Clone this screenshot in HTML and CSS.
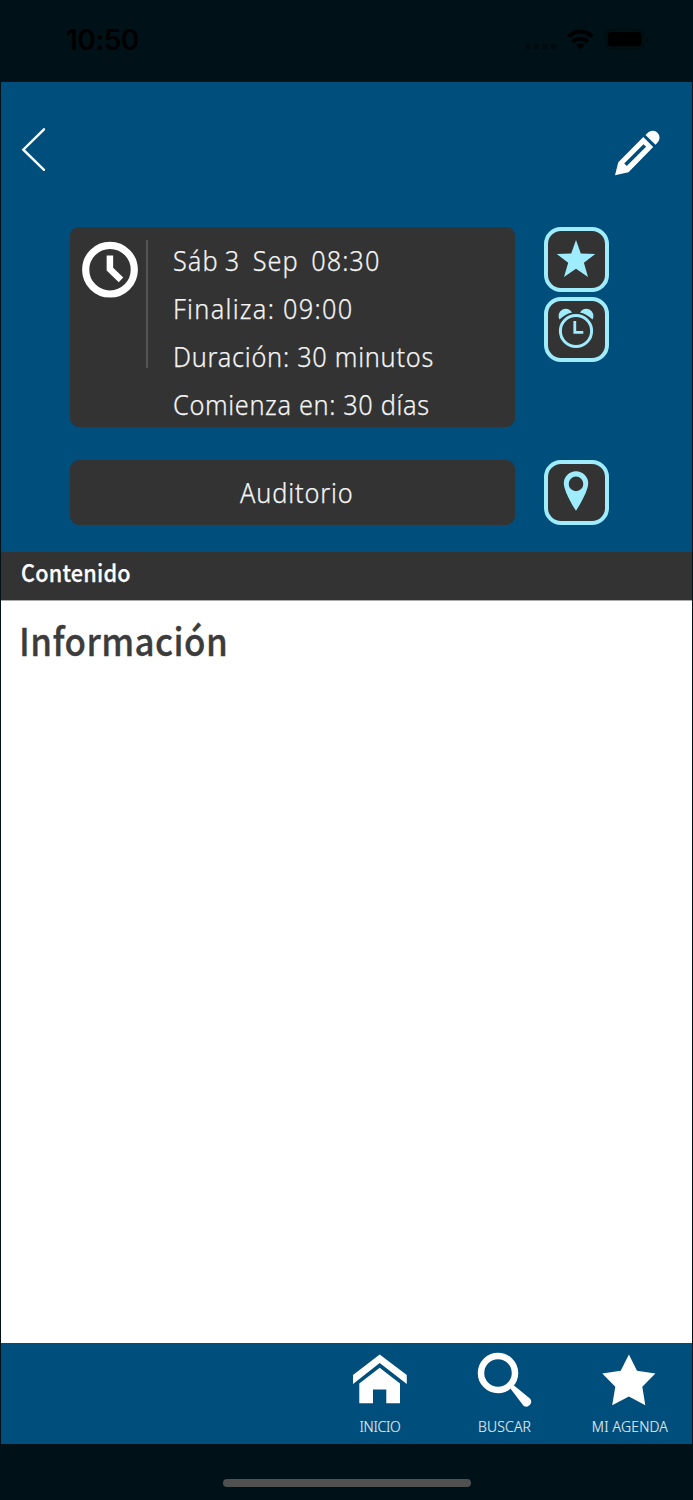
FILE: index.html
```html
<!DOCTYPE html>
<html lang="es">
<head>
<meta charset="utf-8">
<title>Agenda</title>
<link rel="stylesheet" href="styles.css">
</head>
<body>
<div class="phone">
  <div class="status">
    <span class="time">10:50</span>
    <svg class="indicators" width="126" height="30" viewBox="522 24 126 30">
      <g fill="#000b10"><circle cx="528" cy="46.5" r="2.7"/><circle cx="536.5" cy="46.5" r="2.7"/><circle cx="545" cy="46.5" r="2.7"/><circle cx="553.5" cy="46.5" r="2.7"/></g>
      <g fill="none" stroke="#000" stroke-width="4"><path d="M568.2 36.6a17.3 17.3 0 0 1 24.2 0"/><path d="M572.8 41.8a10.8 10.8 0 0 1 15 0"/></g>
      <path d="M576.2 45.2a6.3 6.3 0 0 1 8.2 0L580.3 49.3z"/>
      <rect x="605.2" y="29.5" width="38.6" height="19.6" rx="6" fill="none" stroke="#000c11" stroke-width="1.5"/>
      <rect x="607.5" y="32" width="34.2" height="14.5" rx="3.5"/>
      <path d="M646 36.5q2.5 1 2.500 3t-2.500 3z" fill="#000c11"/>
    </svg>
  </div>
  <header class="hero">
    <div class="toolbar">
      <svg width="26" height="46" viewBox="0 0 26 46" fill="none" stroke="#fff" stroke-width="2.400" stroke-linecap="round"><path d="M23 2.300 2.300 22.700 23 42.800"/></svg>
      <svg width="46" height="46" viewBox="614 130 46 46" fill="#fff"><path fill-rule="evenodd" d="M615 175.200 618.300 162.200 643.300 137 653.200 147 628.500 172.200zM624.200 163.400 626.800 166.100 646.100 146.800 643.500 144.200z"/><path d="M645.500 135 648.300 132.300A6.900 6.900 0 0 1 658 142L655.500 144.800z"/></svg>
    </div>
    <div class="row">
      <div class="card schedule">
        <svg class="clock" width="58" height="58" viewBox="0 0 58 58" fill="none" stroke="#fff"><circle cx="29" cy="28.700" r="24.300" stroke-width="7.200"/><path d="M28.900 14.500V28.200L40 38.800" stroke-width="6.500"/></svg>
        <div class="divider"></div>
        <div class="lines">
          <div><span class="l1">Sáb 3&nbsp; Sep&nbsp; 08:30</span></div>
          <div><span class="l2">Finaliza: 09:00</span></div>
          <div><span class="l3">Duración: 30 minutos</span></div>
          <div><span class="l4">Comienza en: 30 días</span></div>
        </div>
      </div>
      <div class="actions">
        <div class="action"><svg width="57" height="57" viewBox="548 231 57 57" fill="#9fecff"><path d="M576 240 580.800 253.500 595.300 254 583.900 262.800 588 277 576 268.800 564 277 568.200 262.800 556.700 254 571.200 253.500z"/></svg></div>
        <div class="action"><svg width="57" height="57" viewBox="548 301 57 57"><g fill="#9fecff"><path d="M559.500 319.500A6.900 6.900 0 0 1 572 312.400Q564.500 314.200 559.500 319.500z"/><path d="M592.500 319.500A6.900 6.900 0 0 0 580 312.400Q587.500 314.200 592.500 319.500z"/></g><g fill="none" stroke="#9fecff" stroke-width="3"><circle cx="576" cy="331" r="15.600"/><path d="M574.800 321V332.300H583.300" stroke-width="2.800"/></g></svg></div>
      </div>
    </div>
    <div class="row place">
      <div class="card room"><span class="l5">Auditorio</span></div>
      <div class="action"><svg width="57" height="57" viewBox="548 464 57 57" fill="#9fecff"><path fill-rule="evenodd" d="M576 471.200A12.200 12.200 0 0 1 588.200 483.400C588.200 490 580.500 504 576 510.700 571.500 504 563.800 490 563.800 483.400A12.200 12.200 0 0 1 576 471.200zM576 476.600A7.300 7.300 0 1 0 576 491.200 7.300 7.300 0 1 0 576 476.600z"/></svg></div>
    </div>
  </header>
  <div class="section"><span>Contenido</span></div>
  <main class="content"><h1><span>Información</span></h1></main>
  <nav class="tabs">
    <div class="tab"><svg width="58" height="58" viewBox="351 1351 58 58" fill="#fff"><path d="M353 1375 379.700 1354.600 406.800 1375V1384L379.700 1363 353 1384z"/><path d="M359.300 1383.500 379.700 1367.800 400 1383.500V1403.300H386.300V1389.500H373V1403.300H359.300z"/></svg><span class="t1">INICIO</span></div>
    <div class="tab"><svg width="58" height="58" viewBox="476 1351 58 58"><circle cx="498" cy="1373" r="17" fill="none" stroke="#fff" stroke-width="6.500"/><path fill="#fff" d="M513.700 1385.200 530.200 1398.800A4.900 4.900 0 0 1 523.500 1405.700L511.200 1389.500 510.500 1385.800z"/></svg><span class="t2">BUSCAR</span></div>
    <div class="tab"><svg width="58" height="58" viewBox="601 1351 58 58" fill="#fff"><path d="M628.900 1354.600 637 1370.800 655.400 1373.500 642.300 1386.700 645.300 1405.200 628.900 1396.500 612.200 1405.200 615.300 1386.700 602.300 1373.500 620.700 1370.800z"/></svg><span class="t3">MI AGENDA</span></div>
  </nav>
  <div class="home"><div class="handle"></div></div>
</div>
</body>
</html>
```
FILE: styles.css
```css
* { box-sizing: border-box; }
body { margin: 0; font-family: "Noto Sans", sans-serif; }
svg { display: block; flex: none; }
span { display: inline-block; white-space: nowrap; }
.phone { width: 693px; height: 1500px; display: flex; flex-direction: column; border: solid #001217; border-width: 0 1px; background: #fff; }
.status { height: 82px; background: #001217; display: flex; justify-content: space-between; padding: 24px 44px 0 65px; }
.time { font: 600 28px/32px Inter, sans-serif; color: #000; letter-spacing: -0.5px; }
.hero { height: 470px; background: #004e7c; padding-top: 45px; }
.toolbar { display: flex; justify-content: space-between; padding: 0 32px 0 20px; height: 100px; }
.toolbar svg:last-child { margin-top: 3px; }
.row { display: flex; gap: 29px; padding-left: 69px; }
.card { width: 445px; background: #333; border-radius: 9px; color: #f5f5f5; font-weight: 300; font-size: 27.5px; -webkit-text-stroke: 0.25px #f5f5f5; }
.card span { transform: scaleX(0.92); }
.schedule { height: 200px; display: flex; padding: 13px 0 0 11px; }
.clock { margin-top: 1px; }
.divider { width: 2px; height: 128px; background: #555; margin-left: 7px; }
.lines { margin: -3.5px 0 0 25px; line-height: 48px; }
.lines span { transform-origin: left; }
.l1 { letter-spacing: 1.15px; word-spacing: -1.6px; }
.l2 { letter-spacing: 1.4px; }
.l3 { letter-spacing: 0.8px; }
.l4 { letter-spacing: 0.7px; }
.l5 { letter-spacing: 0.95px; }
.actions { display: flex; flex-direction: column; gap: 5px; }
.action { width: 65px; height: 65px; border: 4px solid #9fecff; border-radius: 17px; background: #333; }
.place { margin-top: 33px; }
.room { height: 65px; line-height: 65px; text-align: center; padding-left: 9px; }
.section { height: 48px; background: #333; color: #fff; font: 500 23.5px/41px "Noto Sans CJK SC", sans-serif; padding-left: 20px; -webkit-text-stroke: 0.25px #fff; }
.section span { transform: scaleX(0.92); transform-origin: left; letter-spacing: 0.25px; }
.content { height: 743px; background: #fff; border-top: 1px solid #aaa; padding: 17px 0 0 18px; }
.content h1 { margin: 0; font: 500 38px/44px "Noto Sans CJK SC", sans-serif; color: #3c3c3c; -webkit-text-stroke: 0.3px #3c3c3c; }
.content span { transform: scaleX(0.92); transform-origin: left; letter-spacing: 0.45px; }
.tabs { height: 101px; background: #004e7c; display: flex; justify-content: flex-end; }
.tab { width: 125px; padding-top: 8px; display: flex; flex-direction: column; align-items: center; color: #e3edf3; font-weight: 300; font-size: 15px; line-height: 20px; -webkit-text-stroke: 0.15px #e3edf3; }
.tab span { margin: 7px 0 0 1px; transform: scaleX(0.93); }
.t1 { letter-spacing: -0.3px; }
.t2 { letter-spacing: 0.2px; }
.t3 { letter-spacing: 0.2px; }
.home { height: 56px; background: #001217; display: flex; justify-content: center; padding-top: 35px; }
.handle { width: 248px; height: 8px; border-radius: 4px; background: #505050; }
```
